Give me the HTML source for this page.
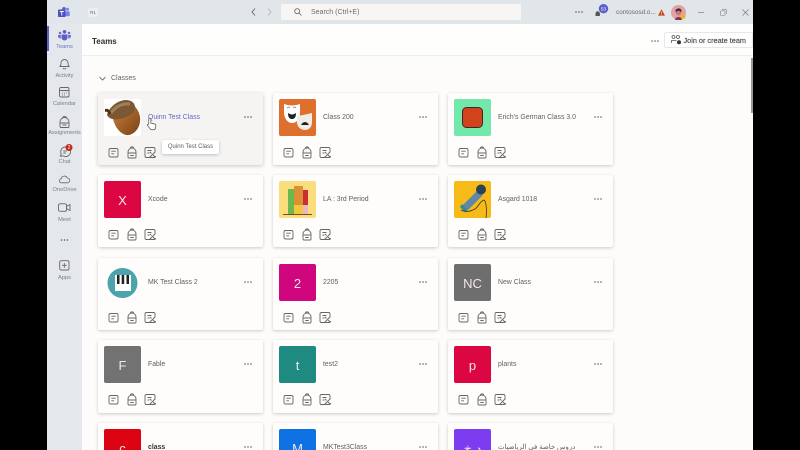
<!DOCTYPE html>
<html><head><meta charset="utf-8">
<style>
html,body{margin:0;padding:0;width:800px;height:450px;overflow:hidden;background:#000;font-family:"Liberation Sans","Noto Sans CJK SC",sans-serif}
#app{position:absolute;left:47px;top:0;width:706px;height:450px;background:#fdfcfb;overflow:hidden;filter:blur(.3px)}
.abs,.c,.t,.th,.nl,.ni{position:absolute}
#top{left:0;top:0;width:706px;height:24px;background:#e1e6ea}
#side{left:0;top:24px;width:35px;height:426px;background:#e4e8ec}
#head{left:35px;top:24px;width:671px;height:31px;background:#fefefd;border-bottom:1px solid #eeeeee}
.nl{left:0;width:35px;text-align:center;font-size:5.7px;color:#7b7f87;white-space:nowrap}
.c{width:165px;height:72px;background:#fefdfc;border-radius:2px;box-shadow:0 1px 3px rgba(0,0,0,.2)}
.th{left:6px;top:6px;width:37px;height:37px;border-radius:2px;color:#f3e6ea;font-size:13px;line-height:39px;text-align:center;overflow:hidden}
.t{left:50px;top:18.5px;font-size:6.9px;line-height:11px;color:#5f5f5f;white-space:nowrap}
.m{position:absolute;left:146px;top:23px;width:8px;height:2px}
.ic{position:absolute;left:10px;top:50.5px;width:50px;height:16px}
svg{display:block;overflow:visible}
</style></head><body>
<svg width="0" height="0" style="position:absolute">
<defs><linearGradient id="ac" x1="0" y1="0" x2="1" y2="1"><stop offset="0" stop-color="#c98238"/><stop offset="1" stop-color="#7a4018"/></linearGradient></defs>
<symbol id="dots" viewBox="0 0 8 2"><circle cx="1" cy="1" r=".75" fill="#555"/><circle cx="4" cy="1" r=".75" fill="#555"/><circle cx="7" cy="1" r=".75" fill="#555"/></symbol>
<symbol id="icons" viewBox="0 0 50 16">
<g fill="none" stroke="#666" stroke-width=".9">
<rect x="1" y="4.500" width="9" height="8.500" rx="1.500"/><path d="M3.300 7.200h4.500M3.300 9.800h2.800"/>
<path d="M20 13V8a4 4 0 0 1 8 0v5a1 1 0 0 1-1 1h-6a1 1 0 0 1-1-1zM22.300 4.500c0-2.200 3.400-2.200 3.400 0M20 9h8M22.300 11.500h3.400"/>
<path d="M38.500 3.500h7a1.500 1.500 0 0 1 1.500 1.500v2.500M38.500 3.500A1.500 1.500 0 0 0 37 5v7a1.500 1.500 0 0 0 1.500 1.500h7.500a1.500 1.500 0 0 0 1.500-1.500M39.500 6.500h4M39.500 9h2M47.500 7.500l-6 6M42 8l1.500 1.500M45 11l2.500 2.500"/>
</g></symbol>
</svg>
<div id="app">
<div class="abs" id="top"></div>
<svg class="abs" style="left:11px;top:7px" width="12" height="11" viewBox="0 0 12 11"><circle cx="9.500" cy="2.300" r="1.500" fill="#7b83eb"/><rect x="7" y="4.300" width="4.800" height="5" rx="1.500" fill="#7b83eb"/><circle cx="6" cy="1.800" r="1.800" fill="#5b5fc7"/><rect x="0" y="2.500" width="7.500" height="7.500" rx=".8" fill="#4b53bc"/><path d="M1.800 4.500h4M3.800 4.500v4" stroke="#fff" stroke-width=".9"/></svg>
<div class="abs" style="left:41px;top:7.500px;width:10px;height:9px;background:#eceff1;border-radius:2px;font-size:4.500px;line-height:9px;text-align:center;color:#666">R1</div>
<svg class="abs" style="left:204px;top:8px" width="30" height="8" viewBox="0 0 30 8" fill="none" stroke-width=".9"><path d="M4 .5 1 4l3 3.500" stroke="#5f6368"/><path d="M17 .500 20 4l-3 3.500" stroke="#b3b7bb"/></svg>
<div class="abs" style="left:234px;top:4px;width:240px;height:16px;background:#f7f6f5;border-radius:2px"></div>
<svg class="abs" style="left:247px;top:8px" width="8" height="8" viewBox="0 0 8 8" fill="none" stroke="#666" stroke-width=".8"><circle cx="3.200" cy="3.200" r="2.500"/><path d="m5 5 2.500 2.500"/></svg>
<div class="abs" style="left:264px;top:7px;width:80px;font-size:7px;line-height:11px;color:#6e6e6e;white-space:nowrap">Search (Ctrl+E)</div>
<svg class="abs" style="left:528px;top:11px;width:8px;height:2px"><use href="#dots"/></svg>
<svg class="abs" style="left:547px;top:4px" width="15" height="14" viewBox="0 0 15 14"><path d="M1.500 12V9.500a2.200 2.200 0 0 1 4.400 0V12z" fill="#555"/><circle cx="9.500" cy="4.700" r="4.700" fill="#5b5fc7"/><text x="9.500" y="6.400" font-size="4.800" text-anchor="middle" fill="#fff" font-family="Liberation Sans">53</text></svg>
<div class="abs" style="left:569px;top:7px;font-size:6.400px;line-height:11px;color:#6c6c6c;white-space:nowrap">contososd.o...</div>
<svg class="abs" style="left:611px;top:9px" width="7" height="7" viewBox="0 0 7 7"><path d="M3.500.2 7 6.600H0z" fill="#c8421a"/><path d="M3.500 2.500v2.200M3.500 5.200v.7" stroke="#fff" stroke-width=".6"/></svg>
<svg class="abs" style="left:624px;top:5px" width="16" height="16" viewBox="0 0 16 16"><circle cx="7.500" cy="7.500" r="7.500" fill="#e2a0a8"/><path d="M4.500 6c0-3 6-3.500 6 0l-.5 1.500H5z" fill="#3a2626"/><circle cx="7.500" cy="8" r="2.400" fill="#c27b74"/><path d="M4 15c.3-4 6.700-4 7 0z" fill="#7a3a48"/><circle cx="12" cy="11.500" r="2.500" fill="#eab12c"/></svg>
<div class="abs" style="left:650.500px;top:11.500px;width:6px;height:1px;background:#9c9fa3"></div>
<svg class="abs" style="left:673px;top:9px" width="7" height="7" viewBox="0 0 7 7" fill="none" stroke="#8e9195" stroke-width=".7"><rect x=".5" y="1.800" width="4.500" height="4.500" rx=".6"/><path d="M2 .5h3.500a1 1 0 0 1 1 1V5"/></svg>
<svg class="abs" style="left:695px;top:9px" width="7" height="7" viewBox="0 0 7 7" stroke="#777" stroke-width=".7"><path d="m.5.500 6 6M6.500.500l-6 6"/></svg>

<div class="abs" id="side"></div>
<div class="abs" style="left:0;top:26px;width:2px;height:25px;background:#5b5fc7"></div>
<svg class="abs" style="left:11px;top:30px" width="13" height="10" viewBox="0 0 13 10" fill="#5b5fc7"><circle cx="6.500" cy="1.800" r="1.800"/><circle cx="2" cy="3" r="1.300" fill="#6a6fd0"/><circle cx="11" cy="3" r="1.300" fill="#6a6fd0"/><path d="M3.500 4.500h6v3a3 3 0 0 1-6 0z"/><path d="M0 5h2.800v3.500C1.200 8.500 0 7.500 0 6zM13 5h-2.800v3.500c1.600 0 2.800-1 2.800-2.500z" fill="#6a6fd0"/></svg>
<div class="nl" style="top:43.500px;color:#6c70c8">Teams</div>
<svg class="abs" style="left:12px;top:58px" width="11" height="12" viewBox="0 0 11 12" fill="none" stroke="#6a6a6a" stroke-width=".9"><path d="M1 8.500c1-1 1-2 1-3.500a3.500 3.500 0 0 1 7 0c0 1.500 0 2.500 1 3.500zM4 10c.4 1.300 2.600 1.300 3 0"/></svg>
<div class="nl" style="top:72.500px">Activity</div>
<svg class="abs" style="left:12px;top:87px" width="11" height="11" viewBox="0 0 11 11" fill="none" stroke="#666" stroke-width=".9"><rect x=".5" y=".5" width="9.500" height="9.500" rx="1.500"/><path d="M.5 3.500h9.500M3 6h.8M5 6h.8M7 6h.8M3 8h.8M5 8h.8"/></svg>
<div class="nl" style="top:101px">Calendar</div>
<svg class="abs" style="left:12px;top:116px" width="11" height="12" viewBox="0 0 11 12" fill="none" stroke="#666" stroke-width=".9"><path d="M1 10.500V6a4.500 4.500 0 0 1 9 0v4.500a1 1 0 0 1-1 1H2a1 1 0 0 1-1-1zM3.500 2.500c0-2.700 4-2.700 4 0M1 7h9M3.500 9h4"/></svg>
<div class="nl" style="top:130px">Assignments</div>
<svg class="abs" style="left:12px;top:144px" width="16" height="13" viewBox="0 0 16 13"><path d="M6 3a4.800 4.800 0 1 1-1.800 8.800L1.500 12.300l.7-2.500A4.800 4.800 0 0 1 6 3zM4.300 7h3.500M4.300 9h2.500" fill="none" stroke="#666" stroke-width=".9"/><circle cx="10" cy="3.500" r="3.500" fill="#c4281c"/><text x="10" y="5.200" font-size="5" text-anchor="middle" fill="#fff" font-family="Liberation Sans">2</text></svg>
<div class="nl" style="top:158.500px">Chat</div>
<svg class="abs" style="left:12px;top:175px" width="11" height="9" viewBox="0 0 11 9" fill="none" stroke="#666" stroke-width=".8"><path d="M2.500 7.800a2 2 0 0 1-.3-4A3.200 3.200 0 0 1 8.300 3a2.400 2.400 0 0 1 0 4.800z"/></svg>
<div class="nl" style="top:186.500px">OneDrive</div>
<svg class="abs" style="left:11px;top:203px" width="13" height="10" viewBox="0 0 13 10" fill="none" stroke="#666" stroke-width=".9"><rect x=".5" y=".8" width="8" height="7.500" rx="1.500"/><path d="m8.500 3.500 3.500-2v6l-3.500-2"/></svg>
<div class="nl" style="top:216.500px">Meet</div>
<svg class="abs" style="left:13px;top:239px;width:9px;height:2px"><use href="#dots"/></svg>
<svg class="abs" style="left:12px;top:260px" width="11" height="11" viewBox="0 0 11 11" fill="none" stroke="#666" stroke-width=".9"><rect x=".7" y=".7" width="9.300" height="9.300" rx="1.500"/><path d="M5.350 3v4.700M3 5.350h4.700"/></svg>
<div class="nl" style="top:274.500px">Apps</div>

<div class="abs" id="head"></div>
<div class="abs" style="left:45px;top:35.500px;font-size:8px;line-height:11px;font-weight:bold;color:#2e2e2e">Teams</div>
<svg class="abs" style="left:604px;top:39.500px;width:8px;height:2px"><use href="#dots"/></svg>
<div class="abs" style="left:617px;top:32px;width:89px;height:16px;background:#fefefe;border:1px solid #e8e8e8;border-radius:2px;box-sizing:border-box"></div>
<svg class="abs" style="left:624px;top:35px" width="11" height="10" viewBox="0 0 11 10" fill="none" stroke="#555" stroke-width=".8"><circle cx="2.500" cy="2" r="1.500"/><circle cx="7" cy="2" r="1.500"/><path d="M.5 8V5.500h5"/><circle cx="8" cy="7.200" r="2" fill="#333" stroke="none"/></svg>
<div class="abs" style="left:636.500px;top:35px;font-size:7.300px;line-height:11px;color:#4a4a4a;white-space:nowrap;-webkit-text-stroke:.15px #4a4a4a">Join or create team</div>
<div class="abs" style="left:704px;top:58px;width:2px;height:55px;background:#9a9a9a"></div>

<svg class="abs" style="left:52px;top:75.500px" width="7" height="5" viewBox="0 0 7 5" fill="none" stroke="#555" stroke-width=".8"><path d="m.5 1 3 3 3-3"/></svg>
<div class="abs" style="left:64px;top:72.500px;font-size:7px;line-height:11px;color:#666">Classes</div>

<div class="c" style="left:51px;top:93px;background:#f5f4f3;box-shadow:0 1px 4px rgba(0,0,0,.22)">
<div class="th" style="background:#fff"><svg width="37" height="37" viewBox="0 0 37 37"><path d="M9 20C12 32 20 37 25 36 33 34 37 26 36 18 35 12 32 8 29 6z" fill="url(#ac)"/><path d="M3 16C5 8 14 1 22 1 28 1 32 5 31 10 29 16 22 19 15 20 10 21 5 20 3 16z" fill="#7b5733"/><path d="M7 14C11 8 18 4 26 5" stroke="#a0805c" stroke-width="3" fill="none"/><path d="M5 16C4 13 3 12 1 13L1 10C4 9 6 11 7 14z" fill="#4d3018"/></svg></div>
<div class="t" style="color:#6467c2">Quinn Test Class</div>
<svg class="m"><use href="#dots"/></svg><svg class="ic"><use href="#icons"/></svg></div>
<div class="c" style="left:226px;top:93px"><div class="th" style="background:#de6f2d"><svg width="37" height="37" viewBox="0 0 37 37"><path d="M5 5q8 3 16 0v8c0 8-4 11-8 11s-8-4-8-11z" fill="#fff"/><path d="M8 9q2-2 3 0M14 9q2-2 3 0" stroke="#777" stroke-width=".7" fill="none"/><path d="M9 14c3 2 5 2 8 0 0 5-2 6-4 6s-4-1-4-6z" fill="#222"/><path d="M18 17q7 -1 15 -3v9c0 5-3 8-7 8s-8-3-8-8z" fill="#f0ede8"/><path d="M22 26c2-4 6-4 8 0z" fill="#222"/></svg></div>
<div class="t">Class 200</div><svg class="m"><use href="#dots"/></svg><svg class="ic"><use href="#icons"/></svg></div>
<div class="c" style="left:401px;top:93px"><div class="th" style="background:#72e8ab"><svg width="37" height="37" viewBox="0 0 37 37"><rect x="8.500" y="8.500" width="20" height="20" rx="4" fill="#d2421d" stroke="#3d2a22" stroke-width="1"/></svg></div>
<div class="t">Erich's German Class 3.0</div><svg class="m"><use href="#dots"/></svg><svg class="ic"><use href="#icons"/></svg></div>

<div class="c" style="left:51px;top:175px"><div class="th" style="background:#dc0742">X</div>
<div class="t">Xcode</div><svg class="m"><use href="#dots"/></svg><svg class="ic"><use href="#icons"/></svg></div>
<div class="c" style="left:226px;top:175px"><div class="th" style="background:#fade7e"><svg width="37" height="37" viewBox="0 0 37 37"><rect x="9" y="8" width="6" height="25" fill="#6cb84c"/><rect x="15" y="5" width="9" height="19" fill="#dd8f37"/><rect x="15" y="24" width="9" height="9" fill="#f2c73c"/><rect x="24" y="9" width="5" height="15" fill="#cc2d2d"/><rect x="24" y="24" width="5" height="9" fill="#e9b6c4"/><rect x="4" y="33" width="29" height="1" fill="#7a4a2a"/></svg></div>
<div class="t">LA : 3rd Period</div><svg class="m"><use href="#dots"/></svg><svg class="ic"><use href="#icons"/></svg></div>
<div class="c" style="left:401px;top:175px"><div class="th" style="background:#f6bb19"><svg width="37" height="37" viewBox="0 0 37 37" fill="none"><path d="M9 24 24 9l5 5-15 15z" fill="#5f87a8"/><circle cx="27" cy="8.500" r="5" fill="#2c4155"/><path d="M8 23l6 6-3 2-5-5z" fill="#2a8c9c"/><path d="M7 29c5 3 10 1 14-1 4-3 5-8 9-9 2 1 3 9 2 18" stroke="#333" stroke-width=".8"/></svg></div>
<div class="t">Asgard 1018</div><svg class="m"><use href="#dots"/></svg><svg class="ic"><use href="#icons"/></svg></div>

<div class="c" style="left:51px;top:258px"><div class="th" style="background:#fefdfc"><svg width="37" height="37" viewBox="0 0 37 37"><circle cx="18.500" cy="19" r="15" fill="#4ba3ab"/><rect x="11" y="11" width="16" height="16" fill="#fff"/><path d="M13 11h2.500v9H13zM17.700 11h2.500v9h-2.500zM22.500 11H25v9h-2.500z" fill="#222"/></svg></div>
<div class="t">MK Test Class 2</div><svg class="m"><use href="#dots"/></svg><svg class="ic"><use href="#icons"/></svg></div>
<div class="c" style="left:226px;top:258px"><div class="th" style="background:#d0067f">2</div>
<div class="t">2205</div><svg class="m"><use href="#dots"/></svg><svg class="ic"><use href="#icons"/></svg></div>
<div class="c" style="left:401px;top:258px"><div class="th" style="background:#6e6e6e">NC</div>
<div class="t">New Class</div><svg class="m"><use href="#dots"/></svg><svg class="ic"><use href="#icons"/></svg></div>

<div class="c" style="left:51px;top:340px;height:73px"><div class="th" style="background:#737273">F</div>
<div class="t">Fable</div><svg class="m"><use href="#dots"/></svg><svg class="ic"><use href="#icons"/></svg></div>
<div class="c" style="left:226px;top:340px;height:73px"><div class="th" style="background:#1f8a80">t</div>
<div class="t">test2</div><svg class="m"><use href="#dots"/></svg><svg class="ic"><use href="#icons"/></svg></div>
<div class="c" style="left:401px;top:340px;height:73px"><div class="th" style="background:#dc0742">p</div>
<div class="t">plants</div><svg class="m"><use href="#dots"/></svg><svg class="ic"><use href="#icons"/></svg></div>

<div class="c" style="left:51px;top:423px"><div class="th" style="background:#dc0412">c</div>
<div class="t" style="font-weight:bold;color:#333">class</div><svg class="m"><use href="#dots"/></svg></div>
<div class="c" style="left:226px;top:423px"><div class="th" style="background:#0f72e2">M</div>
<div class="t">MKTest3Class</div><svg class="m"><use href="#dots"/></svg></div>
<div class="c" style="left:401px;top:423px"><div class="th" style="background:#7c3df0">د خ</div>
<div class="t" dir="rtl" style="left:50px;width:88px;text-align:left">دروس خاصة في الرياضيات</div><svg class="m"><use href="#dots"/></svg></div>

<svg class="abs" style="left:99px;top:117px" width="12" height="14" viewBox="0 0 12 14"><path d="M3.500 1.200c1 0 1.300.6 1.300 1.500v3.500l3.500.6c1.200.3 1.600 1 1.500 2.200L9.500 11c-.2 1-1 1.700-2 1.700H6c-1 0-1.700-.5-2.200-1.400L1.500 8.500c-.6-.8.500-1.600 1.200-1l0 .2V2.700c0-.9.200-1.500.8-1.500z" fill="#fff" stroke="#666" stroke-width=".8"/></svg>
<div class="abs" style="left:115px;top:140px;width:57px;height:14px;background:#fff;border-radius:2px;box-shadow:0 1px 3px rgba(0,0,0,.22);font-size:6px;line-height:14px;text-align:center;color:#5d5d5d;white-space:nowrap">Quinn Test Class</div>
<div class="abs" style="left:140px;top:137.500px;width:0;height:0;border-left:3px solid transparent;border-right:3px solid transparent;border-bottom:3px solid #fff"></div>
</div>
</body></html>
